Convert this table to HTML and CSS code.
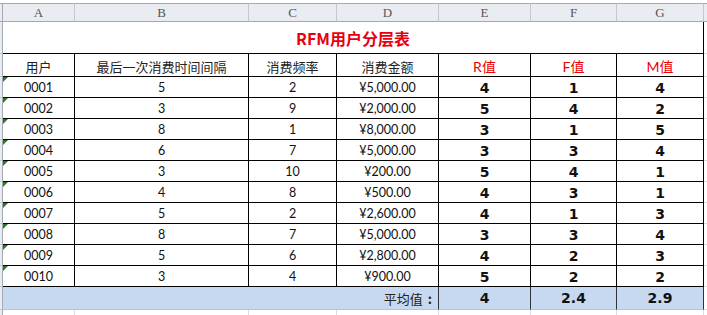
FILE: index.html
```html
<!DOCTYPE html>
<html lang="zh">
<head>
<meta charset="utf-8">
<title>RFM用户分层表</title>
<link rel="stylesheet" href="styles.css">
</head>
<body>
<div class="sheet">
  <div class="row colhdr">
    <div class="corner"></div>
    <div class="ch">A</div><div class="ch">B</div><div class="ch">C</div><div class="ch">D</div><div class="ch">E</div><div class="ch">F</div><div class="ch">G</div><div class="ch last"></div>
  </div>
  <div class="row title-row">
    <div class="rh"></div>
    <div class="title">RFM用户分层表</div>
    <div class="x"></div>
  </div>
  <div class="row head">
    <div class="rh"></div>
    <div class="c">用户</div><div class="c">最后一次消费时间间隔</div><div class="c">消费频率</div><div class="c">消费金额</div>
    <div class="c red">R值</div><div class="c red">F值</div><div class="c red">M值</div>
    <div class="x"></div>
  </div>
  <div class="row data"><div class="rh"></div><div class="c id">0001</div><div class="c">5</div><div class="c">2</div><div class="c">¥5,000.00</div><div class="c v">4</div><div class="c v">1</div><div class="c v">4</div><div class="x"></div></div>
  <div class="row data"><div class="rh"></div><div class="c id">0002</div><div class="c">3</div><div class="c">9</div><div class="c">¥2,000.00</div><div class="c v">5</div><div class="c v">4</div><div class="c v">2</div><div class="x"></div></div>
  <div class="row data"><div class="rh"></div><div class="c id">0003</div><div class="c">8</div><div class="c">1</div><div class="c">¥8,000.00</div><div class="c v">3</div><div class="c v">1</div><div class="c v">5</div><div class="x"></div></div>
  <div class="row data"><div class="rh"></div><div class="c id">0004</div><div class="c">6</div><div class="c">7</div><div class="c">¥5,000.00</div><div class="c v">3</div><div class="c v">3</div><div class="c v">4</div><div class="x"></div></div>
  <div class="row data"><div class="rh"></div><div class="c id">0005</div><div class="c">3</div><div class="c">10</div><div class="c">¥200.00</div><div class="c v">5</div><div class="c v">4</div><div class="c v">1</div><div class="x"></div></div>
  <div class="row data"><div class="rh"></div><div class="c id">0006</div><div class="c">4</div><div class="c">8</div><div class="c">¥500.00</div><div class="c v">4</div><div class="c v">3</div><div class="c v">1</div><div class="x"></div></div>
  <div class="row data"><div class="rh"></div><div class="c id">0007</div><div class="c">5</div><div class="c">2</div><div class="c">¥2,600.00</div><div class="c v">4</div><div class="c v">1</div><div class="c v">3</div><div class="x"></div></div>
  <div class="row data"><div class="rh"></div><div class="c id">0008</div><div class="c">8</div><div class="c">7</div><div class="c">¥5,000.00</div><div class="c v">3</div><div class="c v">3</div><div class="c v">4</div><div class="x"></div></div>
  <div class="row data"><div class="rh"></div><div class="c id">0009</div><div class="c">5</div><div class="c">6</div><div class="c">¥2,800.00</div><div class="c v">4</div><div class="c v">2</div><div class="c v">3</div><div class="x"></div></div>
  <div class="row data"><div class="rh"></div><div class="c id">0010</div><div class="c">3</div><div class="c">4</div><div class="c">¥900.00</div><div class="c v">5</div><div class="c v">2</div><div class="c v">2</div><div class="x"></div></div>
  <div class="row avg">
    <div class="rh"></div>
    <div class="c lbl">平均值<span class="colon">:</span></div>
    <div class="c v">4</div><div class="c v">2.4</div><div class="c v">2.9</div>
    <div class="x"></div>
  </div>
  <div class="row blank">
    <div class="rh"></div>
    <div class="g"></div><div class="g"></div><div class="g"></div><div class="g"></div><div class="g"></div><div class="g"></div><div class="g"></div>
    <div class="x"></div>
  </div>
</div>
</body>
</html>
```

FILE: styles.css
```css
* { box-sizing: border-box; }
html, body { margin: 0; padding: 0; background: #fff; }
body {
  width: 707px;
  height: 315px;
  overflow: hidden;
  font-family: Lato, "Noto Sans CJK SC", sans-serif;
  color: #111;
}
.sheet {
  padding-top: 3px;
}
.row {
  display: grid;
  grid-template-columns: 3px 72px 174px 88px 102px 92px 86px 87px 1fr;
}

/* column header strip */
.colhdr { height: 19px; }
.colhdr > div {
  background: #e9ecf0;
  border-top: 1px solid #a3a9b1;
  border-bottom: 1px solid #a3a9b1;
}
.corner { border-right: 1px solid #a3a9b1; }
.ch {
  border-right: 1px solid #c3c8ce;
  display: flex;
  align-items: center;
  justify-content: center;
  font-family: "Liberation Serif", serif;
  font-size: 13px;
  color: #555;
}
.ch.last { border-right: none; }

/* row header strip (cropped) */
.rh {
  background: #e9ecf0;
  border-right: 1px solid #a3a9b1;
  border-bottom: 1px solid #c3c8ce;
}
.x { border-bottom: 1px solid #dadde2; }

/* title */
.title-row { height: 32px; }
.title {
  grid-column: span 7;
  display: flex;
  align-items: center;
  justify-content: center;
  border-right: 1px solid #000;
  border-bottom: 1px solid #000;
  font-family: "Noto Sans CJK SC", sans-serif;
  font-weight: 700;
  font-size: 16px;
  color: #e8000f;
  padding-top: 1px;
}

/* cells */
.c {
  position: relative;
  display: flex;
  align-items: center;
  justify-content: center;
  border-right: 1px solid #000;
  border-bottom: 1px solid #000;
  font-size: 12.5px;
  white-space: nowrap;
}
.head { height: 23px; }
.head .c {
  font-size: 13px;
  color: #222;
  padding-top: 2px;
}
.head .c.red { color: #f00000; font-size: 14px; }
.data { height: 21px; }
.data .c { padding-top: 1px; }
.id::before {
  content: "";
  position: absolute;
  top: 0;
  left: 0;
  border-top: 5px solid #237a23;
  border-right: 5px solid transparent;
}
.v {
  font-family: "DejaVu Sans", sans-serif;
  font-weight: 700;
  font-size: 14px;
  color: #111;
}

/* average row */
.avg { height: 23px; }
.avg .c {
  background: #c6d9f0;
  border-right-color: #333;
  border-bottom-color: #b9c3ce;
}
.avg .lbl {
  grid-column: span 4;
  justify-content: flex-end;
  padding-right: 6px;
  font-family: "Noto Sans CJK SC", sans-serif;
  font-size: 13px;
  color: #222;
}
.colon { margin-left: 5px; font-weight: 700; }

/* empty grid below */
.blank { height: 10px; }
.g { border-right: 1px solid #d8dbe0; }
```
